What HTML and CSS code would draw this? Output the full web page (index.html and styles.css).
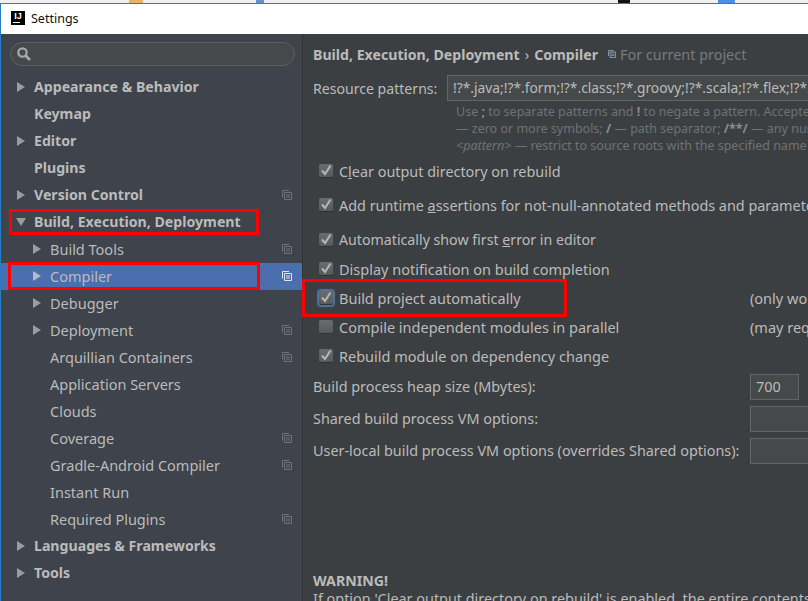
FILE: index.html
```html
<!DOCTYPE html>
<html lang="en">
<head>
<meta charset="utf-8">
<title>Settings</title>
<link rel="stylesheet" href="styles.css">
</head>
<body>
<svg class="defs" width="0" height="0" aria-hidden="true">
  <symbol id="copy" viewBox="0 0 10 10">
    <path d="M.5 7.5V.5h6.5M2.5 2.5h7v7h-7zM4 5h4M4 7h4" fill="none" stroke="currentColor"/>
  </symbol>
  <symbol id="check" viewBox="0 0 14 14">
    <path d="M3 6.5l3 3.5L11.5 1.5" fill="none" stroke="#b4b6b8" stroke-width="2"/>
  </symbol>
  <symbol id="right" viewBox="0 0 8 10"><path d="M0 0l8 5-8 5z" fill="currentColor"/></symbol>
  <symbol id="down" viewBox="0 0 10 8"><path d="M0 0h10L5 8z" fill="currentColor"/></symbol>
</svg>
<div class="strip">
  <span class="bit bit-orange"></span><span class="bit bit-blue"></span><span class="bit bit-black"></span><span class="bit bit-sky"></span>
</div>
<div class="window">
  <header class="titlebar">
    <span class="logo"><span class="logo-text">IJ</span><span class="logo-bar"></span></span>
    <span class="title">Settings</span>
  </header>
  <div class="body">
    <aside class="sidebar">
      <div class="search">
        <svg class="search-icon" viewBox="0 0 14 14" width="14" height="14"><circle cx="5.5" cy="5.5" r="4.2" fill="none" stroke="#a9a9a9" stroke-width="2.2"/><path d="M8.5 8.5l4.5 4.5" stroke="#a9a9a9" stroke-width="2.6"/></svg>
      </div>
      <ul class="tree">
        <li class="row top"><svg class="arrow"><use href="#right"/></svg><span>Appearance &amp; Behavior</span></li>
        <li class="row top"><span class="noarrow"></span><span>Keymap</span></li>
        <li class="row top"><svg class="arrow"><use href="#right"/></svg><span>Editor</span></li>
        <li class="row top"><span class="noarrow"></span><span>Plugins</span></li>
        <li class="row top"><svg class="arrow"><use href="#right"/></svg><span>Version Control</span><svg class="copy"><use href="#copy"/></svg></li>
        <li class="row top"><svg class="arrow arrow-down"><use href="#down"/></svg><span>Build, Execution, Deployment</span></li>
        <li class="row sub"><svg class="arrow"><use href="#right"/></svg><span>Build Tools</span><svg class="copy"><use href="#copy"/></svg></li>
        <li class="row sub selected"><svg class="arrow"><use href="#right"/></svg><span>Compiler</span><svg class="copy"><use href="#copy"/></svg></li>
        <li class="row sub"><svg class="arrow"><use href="#right"/></svg><span>Debugger</span></li>
        <li class="row sub"><svg class="arrow"><use href="#right"/></svg><span>Deployment</span><svg class="copy"><use href="#copy"/></svg></li>
        <li class="row sub"><span class="noarrow"></span><span>Arquillian Containers</span><svg class="copy"><use href="#copy"/></svg></li>
        <li class="row sub"><span class="noarrow"></span><span>Application Servers</span></li>
        <li class="row sub"><span class="noarrow"></span><span>Clouds</span></li>
        <li class="row sub"><span class="noarrow"></span><span>Coverage</span><svg class="copy"><use href="#copy"/></svg></li>
        <li class="row sub"><span class="noarrow"></span><span>Gradle-Android Compiler</span><svg class="copy"><use href="#copy"/></svg></li>
        <li class="row sub"><span class="noarrow"></span><span>Instant Run</span></li>
        <li class="row sub"><span class="noarrow"></span><span>Required Plugins</span><svg class="copy"><use href="#copy"/></svg></li>
        <li class="row top"><svg class="arrow"><use href="#right"/></svg><span>Languages &amp; Frameworks</span></li>
        <li class="row top"><svg class="arrow"><use href="#right"/></svg><span>Tools</span></li>
      </ul>
    </aside>
    <main class="content">
      <div class="crumbs">
        <b>Build, Execution, Deployment</b><span class="sep">›</span><b>Compiler</b>
        <svg class="copy copy-small"><use href="#copy"/></svg><span class="project">For current project</span>
      </div>
      <div class="resource">
        <label class="resource-label">Resource patterns:</label>
        <div class="field field-wide">!?*.java;!?*.form;!?*.class;!?*.groovy;!?*.scala;!?*.flex;!?*.kt;!?*.clj;!?*.aj</div>
      </div>
      <div class="hint">
        <p>Use <b>;</b> to separate patterns and <b>!</b> to negate a pattern. Accepted wildcards: <b>?</b> — exactly one symbol; <b>*</b></p>
        <p>— zero or more symbols; <b>/</b> — path separator; <b>/**/</b> — any number of directories;</p>
        <p><i>&lt;pattern&gt;</i> — restrict to source roots with the specified name</p>
      </div>
      <div class="check check-a"><span class="box"><svg><use href="#check"/></svg></span><span>C<u>l</u>ear output directory on rebuild</span></div>
      <div class="check check-b"><span class="box"><svg><use href="#check"/></svg></span><span>Add runtime <u>a</u>ssertions for not-null-annotated methods and parameters</span></div>
      <div class="check check-c"><span class="box"><svg><use href="#check"/></svg></span><span>Automatically show first <u>e</u>rror in editor</span></div>
      <div class="check"><span class="box"><svg><use href="#check"/></svg></span><span>Display notification on build completion</span></div>
      <div class="check"><span class="box box-focus"><svg><use href="#check"/></svg></span><span class="check-label">Build project automatically</span><span>(only works while not running / debugging)</span></div>
      <div class="check"><span class="box"></span><span class="check-label">Compile independent modules in parallel</span><span>(may require larger heap size)</span></div>
      <div class="check"><span class="box"><svg><use href="#check"/></svg></span><span>Rebuild module on dependency change</span></div>
      <div class="opt opt-first"><span class="opt-label">Build process heap size (Mbytes):</span><div class="field field-heap">700</div></div>
      <div class="opt"><span class="opt-label">Shared build process VM options:</span><div class="field field-long"></div></div>
      <div class="opt"><span class="opt-label">User-local build process VM options (overrides Shared options):</span><div class="field field-long"></div></div>
      <div class="warning">
        <b>WARNING!</b>
        <p>If option 'Clear output directory on rebuild' is enabled, the entire contents of directories</p>
      </div>
    </main>
  </div>
  <span class="mark mark-build"></span>
  <span class="mark mark-compiler"></span>
  <span class="mark mark-auto"></span>
</div>
</body>
</html>
```
FILE: styles.css
```css
* { box-sizing: border-box; }
html, body { margin: 0; height: 100%; }
body {
  width: 808px;
  height: 601px;
  overflow: hidden;
  display: flex;
  flex-direction: column;
  position: relative;
  background: #3c3f41;
  font-family: "Noto Sans", "Open Sans", sans-serif;
  font-size: 14.4px;
  color: #bbbbbb;
}
b, .row.top { font-size: 14.15px; font-weight: 700; }
.defs { position: absolute; }
ul { list-style: none; margin: 0; padding: 0; }
p { margin: 0; }

.strip {
  height: 3px;
  flex: none;
  display: flex;
  background: #f0f0f0;
}
.bit { height: 3px; }
.bit-orange { width: 14px; margin-left: 129px; background: #eab36a; }
.bit-blue { width: 8px; margin-left: 113px; background: #5b93d6; }
.bit-black { width: 12px; margin-left: 354px; background: #111; }
.bit-sky { width: 17px; margin-left: 88px; background: #4a90e8; }

.window {
  flex: 1;
  min-height: 0;
  display: flex;
  flex-direction: column;
  border-top: 1px solid #2a7cc7;
  border-left: 1px solid #2a7cc7;
}
.titlebar {
  height: 30px;
  flex: none;
  display: flex;
  align-items: center;
  padding: 0 0 2px 10px;
  background: #fff;
  color: #111;
  font-size: 12.5px;
}
.logo {
  width: 14px;
  height: 14px;
  background: #000;
  color: #fff;
  display: flex;
  flex-direction: column;
  align-items: center;
  margin-right: 6px;
  overflow: hidden;
}
.logo-text {
  font: bold 9px/10px "Liberation Sans", sans-serif;
  height: 10px;
}
.logo-bar { width: 7px; height: 1px; background: #fff; margin: 1px 0 0 -4px; flex: none; }

.body { flex: 1; min-height: 0; display: flex; }
.sidebar {
  width: 301px;
  flex: none;
  background: #3e434c;
  padding-top: 8px;
}
.search {
  width: 285px;
  height: 24px;
  margin-left: 9px;
  border: 1px solid #5e6060;
  border-radius: 12px;
  background: #45494a;
  display: flex;
  align-items: center;
  padding-left: 6px;
}
.tree { margin-top: 8px; }
.row {
  height: 27px;
  display: flex;
  align-items: center;
  padding: 0 10px 2px 0;
  white-space: nowrap;
}
.row.top { padding-left: 16px; }
.row.sub { padding-left: 32px; font-size: 14.5px; }
.row.selected { background: #4b6eaf; }
.arrow { width: 8px; height: 10px; margin-right: 9px; flex: none; color: #9a9c9e; }
.selected .arrow { color: #b4bccb; }
.arrow-down { width: 10px; height: 8px; margin-left: -1px; margin-right: 8px; }
.noarrow { width: 8px; margin-right: 9px; flex: none; }
.copy { width: 10px; height: 10px; margin-left: auto; flex: none; color: #6f7377; }
.selected .copy { color: #dfe3ea; }

.content {
  flex: 1;
  min-width: 0;
  overflow: hidden;
  padding: 8px 0 0 10px;
  background: #3c3f41;
  border-left: 1px solid #323232;
  white-space: nowrap;
}
.crumbs { display: flex; align-items: center; height: 24px; }
.crumbs .sep { margin: 0 5px; }
.copy-small { width: 8px; height: 8px; margin: 0 4px 0 10px; color: #9fb0c4; }
.project { color: #787a7c; }

.resource { display: flex; align-items: center; margin-top: 9px; height: 26px; }
.resource-label { width: 134px; flex: none; font-size: 14.1px; }
.field {
  height: 26px;
  border: 1px solid #646464;
  background: #45494a;
  padding-left: 5px;
  line-height: 24px;
  flex: none;
}
.field-wide { width: 500px; font-size: 13.8px; }
.hint {
  margin: 1px 0 0 143px;
  font-size: 12.5px;
  line-height: 17px;
  color: #6f7274;
  padding-top: 1px;
}
.hint b { color: #8a8c8e; font-size: 12.5px; }

.check { display: flex; align-items: center; height: 29px; padding-left: 6px; font-size: 14.5px; }
.check-a, .check-b { height: 34px; font-size: 14.4px; }
.check-c { margin-top: 3px; font-size: 14.2px; }
.box {
  width: 14px;
  height: 14px;
  flex: none;
  margin-right: 6px;
  border-radius: 2px;
  background: linear-gradient(#6a6d6f, #565a5c);
  border-bottom: 1px solid #2f3133;
}
.box svg { display: block; width: 14px; height: 14px; }
.box-focus { box-shadow: 0 0 1px 2px #4b74a3; }
.check-label { width: 411px; flex: none; }

.opt { display: flex; align-items: center; height: 32px; }
.opt-first { margin-top: 1px; }
.opt-label { width: 437px; flex: none; padding-bottom: 2px; }
.field-heap { width: 49px; color: #bbbbbb; }
.field-long { width: 100px; }
.warning { margin-top: 105px; line-height: 18px; }
.warning b { display: block; }

.mark {
  position: absolute;
  border: 3px solid #f00;
  pointer-events: none;
}
.mark-build { left: 9px; top: 209px; width: 250px; height: 26px; }
.mark-compiler { left: 8px; top: 262px; width: 252px; height: 28px; }
.mark-auto { left: 302px; top: 279px; width: 265px; height: 38px; }
```
